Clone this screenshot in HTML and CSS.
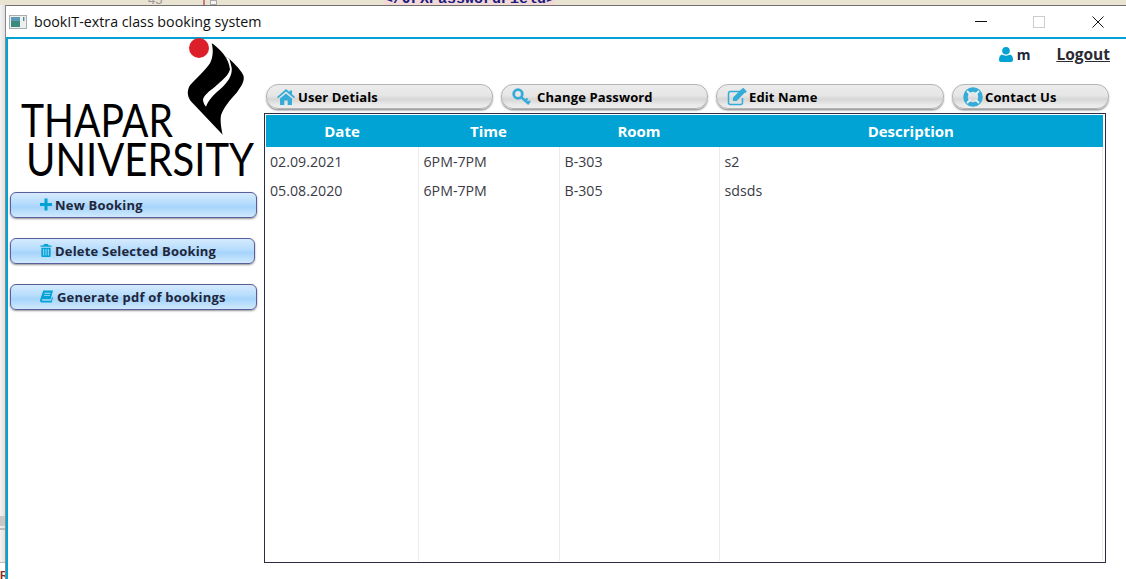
FILE: index.html
```html
<!DOCTYPE html>
<html lang="en">
<head>
<meta charset="utf-8">
<title>bookIT-extra class booking system</title>
<link rel="stylesheet" href="styles.css">
</head>
<body>
<div class="ide-strip">
  <span class="ide-line">45</span>
  <span class="ide-mark"></span>
  <span class="ide-fold"></span>
  <span class="ide-code">&lt;/JFXPasswordField&gt;</span>
</div>
<div class="desk">
  <div class="ide-side">
    <span class="ide-side-fill"></span>
    <span class="ide-side-band"></span>
    <span class="ide-side-rest"></span>
    <span class="ide-side-letter">R</span>
  </div>
  <div class="window">
    <header class="titlebar">
      <svg class="app-icon" viewBox="0 0 18 14"><rect x=".5" y=".5" width="17" height="13" fill="#eef0f0" stroke="#a9adb0"/><rect x="2" y="2" width="9" height="10" fill="#3c8a7e"/><rect x="2" y="2" width="9" height="4" fill="#5d9ab8"/><rect x="14" y="2" width="1.4" height="4" fill="#4c8f8a"/></svg>
      <span class="title-text">bookIT-extra class booking system</span>
      <div class="win-controls">
        <span class="win-min"></span>
        <span class="win-max"></span>
        <svg class="win-close" viewBox="0 0 12 12"><path d="M.5.5l11 11M11.500.5l-11 11" stroke="#111" fill="none"/></svg>
      </div>
    </header>
    <div class="content">
      <aside class="sidebar">
        <div class="logo">
          <svg class="emblem" viewBox="0 0 210 312">
            <path d="M95 22C112 32 128 50 136 62L148 68C165 85 184 103 190 118C195 135 185 150 170 170C150 192 130 215 123 238C120 255 124 280 128 296L32 195C22 180 20 165 30 148C50 125 75 105 90 82C100 62 100 40 95 22Z" fill="#000"/>
            <path d="M136 62C143 72 148 85 150 100C146 118 125 135 105 152C88 165 72 178 69 190C69 200 74 208 78 212C84 195 100 175 122 158C142 140 158 118 155 95C153 85 150 76 148 68Z" fill="#fff"/>
            <circle cx="57" cy="36" r="30" fill="#dd1f2a"/>
          </svg>
          <div class="logo-top">THAPAR</div>
          <div class="logo-bottom">UNIVERSITY</div>
        </div>
        <button class="side-btn">
          <svg class="ic-side" viewBox="0 0 12 12"><path d="M4.500 0h3v4.500H12v3H7.500V12h-3V7.500H0v-3h4.500z"/></svg>
          New Booking
        </button>
        <button class="side-btn side-btn-short">
          <svg class="ic-side" viewBox="0 0 12 14"><path d="M4 0h4l1 1.500h3V3H0V1.500h3zM1 4h10v9c0 .6-.4 1-1 1H2c-.6 0-1-.4-1-1zM3 5.500v7h1v-7zM5.500 5.500v7h1v-7zM8 5.500v7h1v-7z" fill-rule="evenodd"/></svg>
          Delete Selected Booking
        </button>
        <button class="side-btn">
          <svg class="ic-book" viewBox="0 0 14 13"><path d="M3.500 0H14l-2.500 9.500H2.500C1.800 9.500 1.800 11 2.700 11H12l1-4 1 .5L12.500 13H2C.5 13-.3 11.500.2 10zM4.800 2.500v1h6.500v-1zM4.300 4.800v1h6.500v-1z" fill-rule="evenodd"/></svg>
          Generate pdf of bookings
        </button>
      </aside>
      <main class="main">
        <div class="userbar">
          <svg class="ic-user" viewBox="0 0 14 15"><circle cx="7" cy="3.800" r="3.800"/><path d="M3 7.500c2 1.500 6 1.500 8 0 2 .5 3 2.500 3 5.500 0 1.300-.8 2-2 2H2c-1.200 0-2-.7-2-2 0-3 1-5 3-5.500z"/></svg>
          <span class="user-name">m</span>
          <a class="logout" href="#">Logout</a>
        </div>
        <nav class="tabs">
          <button class="tab tab-user">
            <svg class="ic-tab" viewBox="0 0 18 16"><path d="M9 0l3.500 3V1.500h2.500V5.200L18 8l-1 1.200L9 2.500 1 9.200 0 8zM3 9.500L9 4.500l6 5V16h-4.300v-4.500H7.300V16H3z"/></svg>
            User Detials
          </button>
          <button class="tab tab-pass">
            <svg class="ic-key" viewBox="0 0 20 18"><circle cx="6" cy="6" r="4.300" fill="none" stroke-width="2.800"/><path d="M9 9l8 7M13.500 12.500l2-2M16 15l2-2" fill="none" stroke-width="2.400"/></svg>
            Change Password
          </button>
          <button class="tab tab-edit">
            <svg class="ic-edit" viewBox="0 0 20 18"><path d="M13 3.500H3.500c-1.200 0-2 .8-2 2v9c0 1.200.8 2 2 2h10c1.200 0 2-.8 2-2V10" fill="none" stroke="#35abd8" stroke-width="1.500"/><path d="M6 9.500L14.500 1 18 4.500 9.500 13H6zM15.500 0l1-.0 3 3v1l-1 1-3.500-3.500z" fill="#35abd8"/></svg>
            Edit Name
          </button>
          <button class="tab tab-contact">
            <svg class="ic-ring" viewBox="0 0 20 20"><circle cx="10" cy="10" r="7.500" fill="none" stroke="#35abd8" stroke-width="4.500"/><path d="M4 4l3.500 3.500M16 4l-3.500 3.500M4 16l3.500-3.500M16 16l-3.500-3.500" stroke="#e8f5fa" stroke-width="1.800"/></svg>
            Contact Us
          </button>
        </nav>
        <div class="table-box">
          <table class="bookings">
            <colgroup><col class="col-date"><col class="col-time"><col class="col-room"><col></colgroup>
            <thead><tr><th>Date</th><th>Time</th><th>Room</th><th>Description</th></tr></thead>
            <tbody>
              <tr class="row"><td>02.09.2021</td><td>6PM-7PM</td><td>B-303</td><td>s2</td></tr>
              <tr class="row"><td>05.08.2020</td><td>6PM-7PM</td><td>B-305</td><td>sdsds</td></tr>
              <tr><td></td><td></td><td></td><td></td></tr>
            </tbody>
          </table>
        </div>
      </main>
    </div>
  </div>
</div>
</body>
</html>
```
FILE: styles.css
```css
* { box-sizing: border-box; }
html, body { margin: 0; height: 100%; }
body {
  width: 1126px;
  height: 579px;
  overflow: hidden;
  background: #fff;
  font-family: "Open Sans", "Noto Sans", sans-serif;
  display: flex;
  flex-direction: column;
}

/* Fragment of the window behind */
.ide-strip {
  height: 5px;
  flex: none;
  display: flex;
  align-items: flex-end;
  overflow: hidden;
  background: #e9e3d2;
}
.ide-line { margin-left: 148px; width: 55px; font: 13px/10px "Liberation Sans", sans-serif; color: #999; }
.ide-mark { width: 2px; height: 5px; background: #c87a7a; }
.ide-fold { width: 7px; height: 5px; margin-left: 5px; background: #f4f4f4; border: 1px solid #aaa; }
.ide-code {
  margin-left: 167px;
  font: bold 15px/10px "Liberation Mono", monospace;
  color: #1a1a80;
  background: #f2d9d6;
}

.desk { flex: 1; display: flex; min-height: 0; }
.ide-side { width: 6px; flex: none; display: flex; flex-direction: column; background: linear-gradient(90deg, #f3f3f3, #dcdcdc); }
.ide-side-fill { flex: 1; }
.ide-side-band { height: 10px; margin-bottom: 2px; background: #c8c8c8; }
.ide-side-rest { height: 35px; border-top: 2px solid #bdbdbd; border-bottom: 1px solid #bdbdbd; }
.ide-side-letter { height: 16px; padding-top: 7px; font: bold 11px/11px "Liberation Sans", sans-serif; color: #8a2b2b; background: #fff; overflow: hidden; }

.window { flex: 1; display: flex; flex-direction: column; min-width: 0; background: #fff; box-shadow: inset 0 1px 0 #6f6f6f, -1px 0 0 #8a8a8a; }

.titlebar {
  height: 34px;
  flex: none;
  display: flex;
  align-items: center;
  padding: 1px 0 0 3px;
  border-bottom: 2px solid #00a3d4;
}
.app-icon { width: 18px; height: 14px; flex: none; }
.title-text { margin-left: 7px; font-size: 14.250px; color: #111; }
.win-controls { margin-left: auto; display: flex; align-items: center; }
.win-min { width: 12px; height: 1px; background: #111; }
.win-max { width: 12px; height: 12px; margin-left: 46px; border: 1px solid #ccc; }
.win-close { width: 12px; height: 12px; margin: 0 22px 0 47px; }

.content { flex: 1; display: flex; min-height: 0; border-left: 2px solid #00a3d4; background: #fff; }

.sidebar { width: 256px; flex: none; padding: 0 0 0 2px; display: flex; flex-direction: column; align-items: flex-start; }
.logo { position: relative; width: 248px; height: 153px; color: #000; font-family: Lato, sans-serif; }
.emblem { position: absolute; left: 170px; top: -3px; width: 70px; height: 104px; }
.logo-top, .logo-bottom { position: absolute; font-size: 46px; line-height: 38px; transform-origin: left center; white-space: nowrap; }
.logo-top { left: 11px; top: 62px; transform: scaleX(.85); }
.logo-bottom { left: 16px; top: 101px; transform: scaleX(.87); }

.side-btn {
  width: 247px;
  height: 26px;
  margin-bottom: 20px;
  padding: 0 0 1px 29px;
  display: flex;
  align-items: center;
  border: 1px solid #5a5e9c;
  border-radius: 6px;
  background: linear-gradient(#d5eafd 0%, #b9defc 40%, #a6d4fb 58%, #c1e2fc 85%, #cfe9fd 100%);
  box-shadow: 0 1px 2px rgba(40,40,40,.5);
  font: bold 13px "Open Sans", sans-serif;
  color: #22263a;
  letter-spacing: .2px;
  white-space: nowrap;
}
.side-btn-short { width: 245px; }
.ic-side { width: 12px; height: 13px; margin-right: 3px; fill: #00a3d4; flex: none; }
.ic-book { width: 13px; height: 13px; margin-right: 4px; fill: #00a3d4; flex: none; }

.main { flex: 1; min-width: 0; display: flex; flex-direction: column; }
.userbar { height: 45px; flex: none; display: flex; align-items: center; padding: 0 16px 15px 0; justify-content: flex-end; }
.ic-user { width: 14px; height: 15px; fill: #00a3d4; }
.user-name { margin: 0 26px 0 4px; font: bold 14px "Open Sans", sans-serif; color: #22263a; }
.logout { font: bold 15.500px "Open Sans", sans-serif; color: #2b2b33; text-decoration: underline; }

.tabs { display: flex; gap: 8px; height: 25px; flex: none; margin: 0 0 4px 2px; }
.tab {
  height: 25px;
  padding: 0 0 0 10px;
  display: flex;
  align-items: center;
  gap: 2px;
  border: 1px solid #b4b4b4;
  border-radius: 12px;
  background: linear-gradient(#ececec 0%, #e6e6e6 45%, #d6d6d6 62%, #e9e9e9 85%, #eeeeee 100%);
  box-shadow: 0 1.500px 1.500px rgba(70,70,70,.55);
  font: bold 13px "Open Sans", sans-serif;
  color: #000;
  letter-spacing: .12px;
  white-space: nowrap;
}
.tab-user { width: 227px; }
.tab-pass { width: 207px; }
.tab-edit { width: 228px; }
.tab-contact { width: 157px; }
.ic-tab { width: 18px; height: 16px; margin-right: 1px; fill: #35abd8; flex: none; }
.ic-key { width: 20px; height: 18px; stroke: #35abd8; flex: none; margin-right: 3px; }
.ic-edit { width: 20px; height: 18px; flex: none; }
.ic-ring { width: 20px; height: 20px; flex: none; }

.table-box { flex: none; width: 842px; height: 450px; border: 1.500px solid #2b2d42; padding: 1px 2px 1px 1px; background: #fff; }
.bookings { width: 100%; height: 100%; border-collapse: collapse; table-layout: fixed; font-size: 14.200px; }
.col-date { width: 152px; }
.col-time { width: 141px; }
.col-room { width: 160px; }
.bookings th {
  height: 32px;
  padding: 0;
  background: #00a3d4;
  color: #fff;
  font: bold 15px "Open Sans", sans-serif;
  text-align: center;
}
.bookings td {
  padding: 0 0 0 5px;
  border-left: 1px solid #ececec;
  color: #3b3b45;
  vertical-align: middle;
}
.bookings td:first-child { padding-left: 4px; border-left: 0; }
.bookings td:last-child { border-right: 1px solid #ececec; }
.row { height: 29px; }
```
